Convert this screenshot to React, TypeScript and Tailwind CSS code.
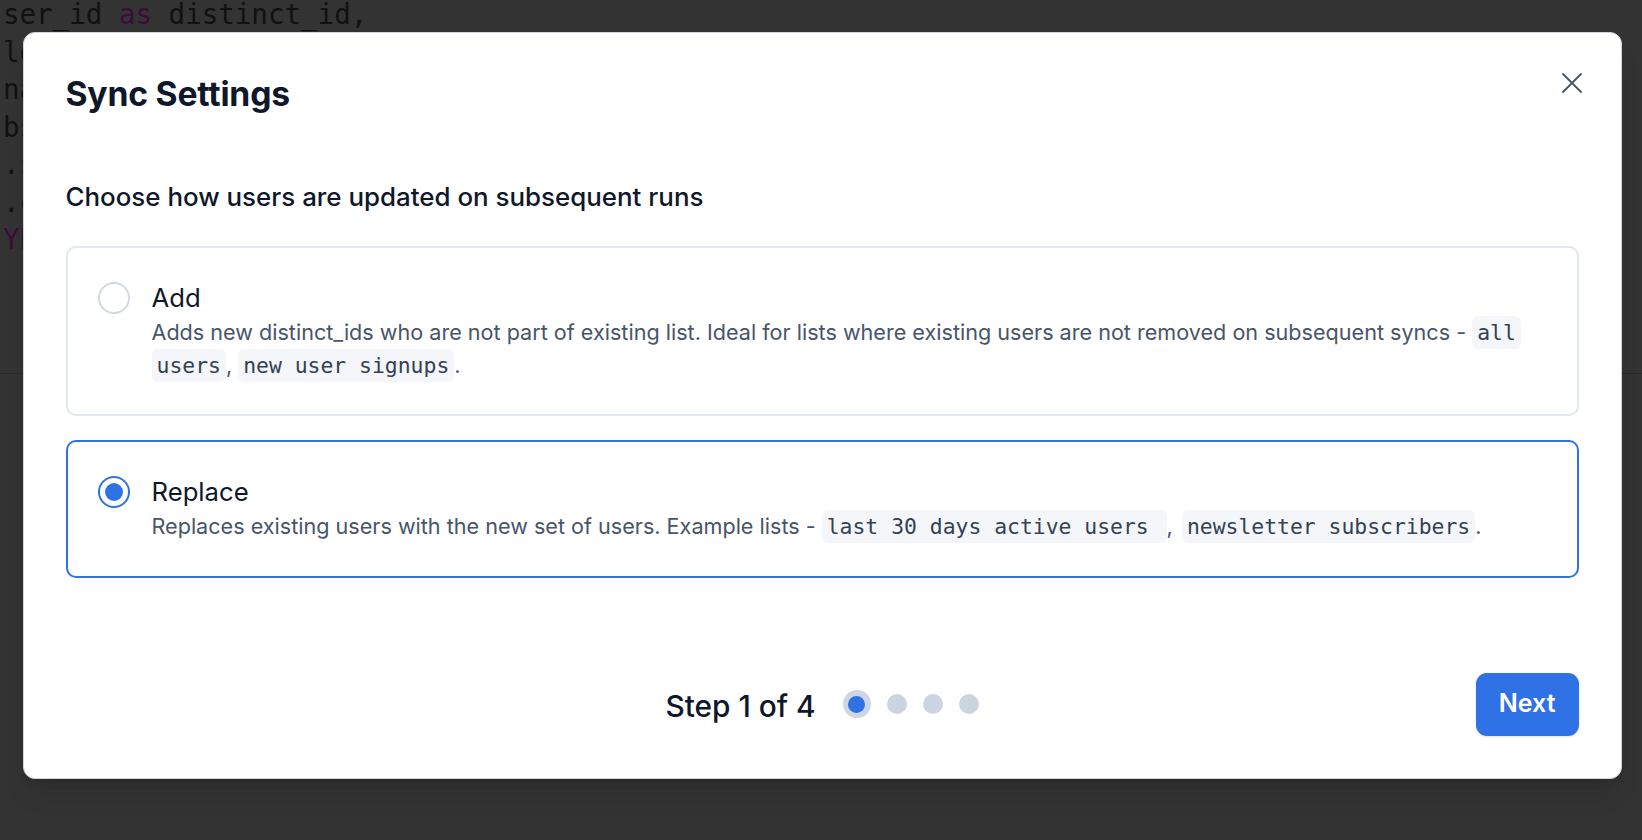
import React from "react";

const codeLines: { t: string; k?: string; rest?: string }[] = [
  { t: "ser_id ", k: "as", rest: " distinct_id," },
  { t: "lower(email) ", k: "as", rest: " email," },
  { t: "name ", k: "as", rest: " name," },
  { t: "bs.plan ", k: "as", rest: " plan," },
  { t: ".", k: "select", rest: "()" },
  { t: ".count()" },
  { t: "", k: "YEAR", rest: "" },
];

function Chip({ children, className = "" }: { children: React.ReactNode; className?: string }) {
  return (
    <code
      className={
        "rounded-[6px] bg-[#f4f6f9] px-[5px] py-[4px] font-['DejaVu_Sans_Mono',monospace] text-[21.4px] text-[#334155] [box-decoration-break:clone] " +
        className
      }
    >
      {children}
    </code>
  );
}

function Radio({ checked }: { checked: boolean }) {
  return checked ? (
    <span className="mt-[2px] flex h-[32px] w-[32px] shrink-0 items-center justify-center rounded-full border-2 border-[#2f72e4] bg-white">
      <span className="h-[18px] w-[18px] rounded-full bg-[#2f72e4]" />
    </span>
  ) : (
    <span className="mt-[2px] h-[32px] w-[32px] shrink-0 rounded-full border-2 border-[#cfd8e3] bg-white" />
  );
}

export default function App() {
  return (
    <div className="relative h-[840px] w-full overflow-hidden bg-[#333333] font-['Inter',sans-serif]">
      {/* background editor */}
      <div className="h-[374px] overflow-hidden border-b border-[#2a2a2a] pl-[3px]">
        <div className="-mt-[4px] whitespace-pre font-['DejaVu_Sans_Mono',monospace] text-[27.5px] leading-[37.5px] text-[#111111]">
          {codeLines.map((l, i) => (
            <div key={i}>
              {l.t}
              {l.k && <span className="text-[#3a0d3a]">{l.k}</span>}
              {l.rest}
            </div>
          ))}
        </div>
      </div>

      {/* modal */}
      <div className="absolute inset-0 flex justify-center pl-[2px] pt-[32px]">
        <div className="relative flex h-fit w-[1599px] flex-col rounded-[12px] border border-[#cfd6e0] bg-white px-[42px] pb-[42px] pt-[40px] shadow-xl">
          <button className="absolute right-[31px] top-[32px] flex h-[36px] w-[36px] items-center justify-center text-[#475569]">
            <svg width="20" height="20" viewBox="0 0 20 20" fill="none" stroke="currentColor" strokeWidth="1.8" strokeLinecap="round">
              <path d="M1 1L19 19M19 1L1 19" />
            </svg>
          </button>

          <h2 className="text-[33.7px] font-bold leading-[42px] tracking-[-0.2px] text-[#0f172a]">Sync Settings</h2>

          <p className="mt-[66px] text-[25.9px] font-medium leading-[32px] text-[#0f172a]">
            Choose how users are updated on subsequent runs
          </p>

          <div className="mt-[33px] flex flex-col gap-[24px]">
            <div className="flex gap-[22px] rounded-[10px] border-2 border-[#e2e8f0] py-[32px] pl-[30px] pr-[30px]">
              <Radio checked={false} />
              <div className="min-w-0 flex-1">
                <div className="text-[25.7px] leading-[36px] text-[#0f172a]">Add</div>
                <div className="text-[21.6px] leading-[32px] text-[#475569]">
                  Adds new distinct_ids who are not part of existing list. Ideal for lists where existing users are not removed on subsequent syncs -{" "}
                  <Chip>all users</Chip>, <Chip>new user signups</Chip>.
                </div>
              </div>
            </div>

            <div className="flex gap-[22px] rounded-[10px] border-2 border-[#2f72e4] py-[32px] pl-[30px] pr-[30px]">
              <Radio checked />
              <div className="min-w-0 flex-1">
                <div className="text-[25.7px] leading-[36px] text-[#0f172a]">Replace</div>
                <div className="text-[21.6px] leading-[32.5px] text-[#475569]">
                  Replaces existing users with the new set of users. Example lists -{" "}
                  <Chip>{"last 30 days active users "}</Chip>, <Chip className="ml-[3px]">newsletter subscribers</Chip>.
                </div>
              </div>
            </div>
          </div>

          <div className="mt-[95px] grid grid-cols-[1fr_auto_1fr] items-center">
            <div />
            <div className="flex items-center gap-[27px]">
              <span className="pt-[4px] text-[29.8px] font-medium leading-[36px] text-[#0f172a]">Step 1 of 4</span>
              <div className="flex items-center gap-[16px]">
                <span className="flex h-[28px] w-[28px] items-center justify-center rounded-full bg-[#cdd6e2]">
                  <span className="h-[17px] w-[17px] rounded-full bg-[#2f72e4]" />
                </span>
                <span className="h-[20px] w-[20px] rounded-full bg-[#cbd5e1]" />
                <span className="h-[20px] w-[20px] rounded-full bg-[#cbd5e1]" />
                <span className="h-[20px] w-[20px] rounded-full bg-[#cbd5e1]" />
              </div>
            </div>
            <div className="flex justify-end">
              <button className="h-[63px] rounded-[11px] bg-[#2f72e6] px-[23px] text-[25px] font-semibold text-white shadow-sm">
                Next
              </button>
            </div>
          </div>
        </div>
      </div>
    </div>
  );
}
